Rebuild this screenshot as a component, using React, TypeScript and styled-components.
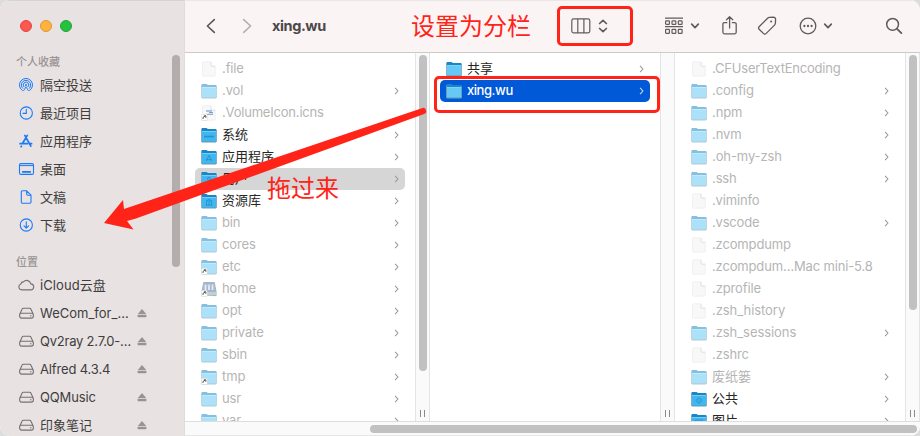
import React from "react";
import styled, { createGlobalStyle, css } from "styled-components";

const Global = createGlobalStyle`
  * { box-sizing: border-box; }
  html, body { margin: 0; padding: 0; }
  body {
    background: #dcdcdc;
    font-family: Inter, "Noto Sans CJK SC", sans-serif;
    overflow: hidden;
  }
  svg { display: block; }
`;

const RED = "#ff2318";

const Window = styled.div`
  position: relative;
  display: flex;
  width: 920px;
  height: 436px;
  overflow: hidden;
  border-radius: 10px;
  background: #fff;
`;

/* ---------- sidebar ---------- */

const Sidebar = styled.aside`
  display: flex;
  flex: none;
  width: 184px;
  height: 436px;
  background: #e8e2e2;
  box-shadow: inset 0 1px 0 #d8d2d2;
`;

const SidebarContent = styled.div`
  width: 172px;
  overflow: hidden;
`;

const Lights = styled.div`
  display: flex;
  gap: 8px;
  padding: 20px 0 0 20px;
  height: 54px;
`;

const Light = styled.span<{ $fill: string; $edge: string }>`
  width: 12px;
  height: 12px;
  border-radius: 50%;
  background: ${(p) => p.$fill};
  border: 0.5px solid ${(p) => p.$edge};
`;

const SectionTitle = styled.h2<{ $top?: number }>`
  margin: ${(p) => p.$top ?? 0}px 0 0 16px;
  height: 17px;
  line-height: 17px;
  font-size: 11px;
  font-weight: 500;
  color: #989393;
`;

const SideRow = styled.div`
  display: flex;
  align-items: center;
  height: 28px;
  padding-left: 18px;
  color: #403d3d;
`;

const SideIcon = styled.span`
  width: 22px;
  flex: none;
`;

const SideLabel = styled.span<{ $ls?: number }>`
  flex: none;
  width: 97px;
  font-size: 13px;
  line-height: 20px;
  white-space: nowrap;
  letter-spacing: ${(p) => p.$ls ?? 0}px;
`;

const SideScroll = styled.div`
  width: 8px;
  height: 212px;
  margin-top: 55px;
  border-radius: 4px;
  background: #b3aead;
`;

/* ---------- main area ---------- */

const Main = styled.main`
  display: flex;
  flex-direction: column;
  width: 736px;
  height: 436px;
  border-left: 1px solid #dfdcdc;
`;

const Toolbar = styled.header`
  display: flex;
  align-items: center;
  flex: none;
  height: 53px;
  padding-left: 20px;
  background: #fbf4f4;
  border-bottom: 1px solid #cfcaca;
  box-shadow: inset 0 1px 0 #ece6e6;
`;

const Tool = styled.span<{ $ml?: number }>`
  flex: none;
  margin-left: ${(p) => p.$ml ?? 0}px;
`;

const Title = styled.h1`
  margin: 0 0 0 19px;
  width: 139px;
  font-size: 14.5px;
  line-height: 20px;
  font-weight: 700;
  letter-spacing: -0.4px;
  color: #4b4747;
`;

const Note = styled.span`
  font-family: "Noto Sans CJK SC", sans-serif;
  font-size: 24px;
  line-height: 30px;
  white-space: nowrap;
  color: ${RED};
`;

const ToolNote = styled.div`
  width: 146px;
  flex: none;
  padding-bottom: 2px;
`;

const ViewSwitch = styled.div`
  display: flex;
  align-items: center;
  flex: none;
  width: 76px;
  height: 40px;
  padding-left: 11px;
  border: 3px solid ${RED};
  border-radius: 5px;
`;

const Browser = styled.div`
  display: flex;
  height: 368px;
  overflow: hidden;
`;

const Column = styled.section`
  width: 230px;
  flex: none;
  padding: 5px 10px 0;
  height: 368px;
  overflow: hidden;
`;

const Track = styled.div`
  display: flex;
  flex-direction: column;
  justify-content: space-between;
  align-items: center;
  flex: none;
  width: 15px;
  height: 368px;
  padding: 2px 0 4px;
  background: #fafafa;
  border-left: 1px solid #e4e4e4;
  border-right: 1px solid #e4e4e4;
`;

const Thumb = styled.div<{ $h: number }>`
  width: 8px;
  height: ${(p) => p.$h}px;
  border-radius: 4px;
  background: #c1c1c1;
`;

const Grip = styled.div`
  width: 5px;
  height: 7px;
  border: solid #8a8a8a;
  border-width: 0 1px;
`;

const BottomTrack = styled.div`
  display: flex;
  justify-content: flex-end;
  height: 15px;
  padding: 3px 3px 0 0;
  background: #fafafa;
  border-top: 1px solid #dedede;
  border-bottom: 1px solid #e6e6e6;
`;

const BottomThumb = styled.div`
  width: 547px;
  height: 8px;
  border-radius: 4px;
  background: #c1c1c1;
`;

type Tone = "dim" | "solid" | "picked" | "active";

const Row = styled.div<{ $tone: Tone }>`
  display: flex;
  align-items: center;
  height: 22px;
  padding: 0 5px 0 6px;
  border-radius: 5px;
  color: ${(p) => (p.$tone === "dim" ? "#b5b5b5" : "#262626")};
  ${(p) => p.$tone === "picked" && css`background: #d6d6d6;`}
  ${(p) =>
    p.$tone === "active" &&
    css`
      background: #0059d6;
      color: #fff;
      font-weight: 500;
    `}
`;

const RowIcon = styled.span`
  width: 21px;
  flex: none;
  padding-bottom: 1px;
`;

const RowLabel = styled.span<{ $ls: number }>`
  flex: 1;
  padding-bottom: 2px;
  font-size: 13px;
  line-height: 20px;
  white-space: nowrap;
  letter-spacing: ${(p) => p.$ls}px;
`;

const Overlay = styled.div`
  position: absolute;
  inset: 0;
  pointer-events: none;
`;

const SelectionFrame = styled.div`
  position: absolute;
  left: 434px;
  top: 76px;
  width: 226px;
  height: 37px;
  border: 3px solid ${RED};
  border-radius: 5px;
`;

const DragNote = styled.div`
  position: absolute;
  left: 267px;
  top: 172px;
`;

/* ---------- icons ---------- */

const BLUE = "#1a7af8";

const sideIcons: Record<string, React.ReactNode> = {
  airdrop: (
    <g fill="none" stroke={BLUE} strokeWidth="1" strokeLinecap="round">
      <path d="M4.4 13.6A6.6 6.6 0 1 1 11.6 13.6" />
      <path d="M4.7 11.4A4.7 4.7 0 1 1 11.3 11.4" />
      <path d="M6 9.9A2.8 2.8 0 1 1 10 9.9" />
      <circle cx="8" cy="8" r="1" fill={BLUE} stroke="none" />
      <path d="M8 10L5.6 13.7M8 10L10.4 13.7" strokeWidth="0.9" />
    </g>
  ),
  recent: (
    <g fill="none" stroke={BLUE} strokeWidth="1.1" strokeLinecap="round">
      <circle cx="8.3" cy="8" r="6.1" />
      <path d="M8.3 4.2V8.4H5" />
    </g>
  ),
  apps: (
    <g fill="none" stroke={BLUE} strokeWidth="1.7" strokeLinecap="round">
      <path d="M6.8 2.4L12.8 13.2M9.3 2.4L4.5 10.5M2.1 10.7H9.4M12 10.7H13.6M3.4 13.2L3.1 13.7" />
    </g>
  ),
  desktop: (
    <g>
      <rect x="1.5" y="2.6" width="14" height="10.8" rx="1.4" fill="none" stroke={BLUE} strokeWidth="1.1" />
      <path d="M1.5 4.6H15.5" stroke={BLUE} strokeWidth="1" />
      <rect x="4" y="10" width="9" height="1.8" rx="0.5" fill={BLUE} />
    </g>
  ),
  document: (
    <path d="M4.4 1.8H8.7L13 6.2V13.1Q13 14.2 11.9 14.2H4.4Q3.3 14.2 3.3 13.1V2.9Q3.3 1.8 4.4 1.8ZM8.7 1.8V5.3Q8.7 6.2 9.6 6.2H13" fill="none" stroke={BLUE} strokeWidth="1.1" strokeLinejoin="round" />
  ),
  download: (
    <g fill="none" stroke={BLUE} strokeWidth="1.1" strokeLinecap="round" strokeLinejoin="round">
      <circle cx="8.3" cy="8" r="6.1" />
      <path d="M8.3 4.8V10.9M6 8.8L8.3 11.1L10.6 8.8" />
    </g>
  ),
  cloud: (
    <path d="M3.7 12.9A3.1 3.1 0 0 1 2.9 6.9A2.4 2.4 0 0 1 5.5 4.9A4.2 4.2 0 0 1 12.8 6.9A3 3 0 0 1 12.6 12.9Z" fill="none" stroke="#767272" strokeWidth="1.1" strokeLinejoin="round" />
  ),
  drive: (
    <g fill="none" stroke="#767272" strokeWidth="1.1" strokeLinejoin="round">
      <path d="M1.9 9L4 4.2Q4.4 3.2 5.4 3.2H11.6Q12.6 3.2 13 4.2L15.1 9" />
      <rect x="1.6" y="8.3" width="13.8" height="4.8" rx="2" />
      <circle cx="12.8" cy="10.7" r="0.7" fill="#767272" stroke="none" />
    </g>
  ),
};

const SideGlyph = ({ name }: { name: string }) => (
  <svg width="17" height="16" viewBox="0 0 17 16">{sideIcons[name]}</svg>
);

const Eject = () => (
  <svg width="10" height="10" viewBox="0 0 10 10" fill="#989393">
    <path d="M5 1L9.4 6.2H0.6Z" />
    <rect x="0.6" y="7.1" width="8.8" height="2.1" rx="0.4" />
  </svg>
);

const Folder = ({ dim, mark }: { dim?: boolean; mark?: string }) => (
  <svg width="16" height="16" viewBox="0 0 16 16">
    <path d="M0.4 2Q0.4 0.9 1.4 0.9H5.6L6.9 1.9H14.6Q15.6 1.9 15.6 2.9V5H0.4Z" fill={dim ? "#86bfdf" : "#1a86c6"} />
    <rect x="0.4" y="4" width="15.2" height="11.2" rx="0.9" fill={dim ? "#ace1fa" : mark ? "#41b6ef" : "#66c9f5"} />
    <path d="M0.8 4.5H15.2" stroke={dim ? "#c6edfd" : "#80d5f9"} strokeWidth="0.8" />
    <path d="M0.8 14.9H15.2" stroke={dim ? "#b3c6cf" : "#6d96aa"} strokeWidth="0.9" />
    <path d="M0.4 2.3V14.8M15.6 3V14.8" stroke={dim ? "#bccbd3" : "#7ba2b5"} strokeWidth="0.8" />
    {mark && <path d={mark} fill="none" stroke="#1f93d0" strokeWidth="0.9" />}
  </svg>
);

const File = () => (
  <svg width="16" height="16" viewBox="0 0 16 16">
    <path d="M2.4 0.8H10L14.3 5.2V14.2Q14.3 15.2 13.3 15.2H2.4Q1.5 15.2 1.5 14.2V1.8Q1.5 0.8 2.4 0.8Z" fill="#f8f8f8" stroke="#ececec" strokeWidth="0.7" />
    <path d="M10 0.8V4.2Q10 5.2 11 5.2H14.3Z" fill="#fff" />
    <path d="M10 1.2V4.2Q10 5.2 11 5.2H14" fill="none" stroke="#d6d6d6" strokeWidth="0.8" />
  </svg>
);

const AliasBadge = () => (
  <g>
    <rect x="0.3" y="9.3" width="6" height="6.2" rx="0.8" fill="#fff" stroke="#c5c5c5" strokeWidth="0.4" />
    <path d="M2 14V12.4L4.4 11M2.9 10.8H4.8V12.8" fill="none" stroke="#555" strokeWidth="1" />
  </g>
);

const AliasFolder = () => (
  <svg width="16" height="16" viewBox="0 0 16 16"><Folder dim /><AliasBadge /></svg>
);

const IconFile = () => (
  <svg width="16" height="16" viewBox="0 0 16 16">
    <File />
    <path d="M5 6H11M6 9.4H12" stroke="#86b4e8" strokeWidth="1.4" />
    <path d="M8 7.6H12" stroke="#8a8f99" strokeWidth="1" />
    <AliasBadge />
  </svg>
);

const HomeDrive = () => (
  <svg width="16" height="16" viewBox="0 0 16 16">
    <path d="M2.4 0.9H13.6L15.5 10V14.9H0.5V10Z" fill="#a5b5ca" />
    <path d="M4.5 3.4V9M8 3.4V9M11.5 3.4V9" stroke="#edf2f8" strokeWidth="1.7" />
    <path d="M3 4.8H13" stroke="#c9d3e0" strokeWidth="0.7" />
    <rect x="0.6" y="11" width="14.8" height="3.6" fill="#c3ccd8" />
    <path d="M11 14.6H15" stroke="#8dc76e" strokeWidth="0.8" />
    <AliasBadge />
  </svg>
);

const Chevron = ({ color }: { color: string }) => (
  <svg width="6" height="8" viewBox="0 0 6 8" fill="none" stroke={color} strokeWidth="1.1">
    <path d="M1.1 0.9L3.9 4L1.1 7.1" />
  </svg>
);

const marks = {
  mac: "M3 9.6H13M4 8.4V10.6M6 8.4V10.6M8 8.4V10.6M10 8.4V10.6M12 8.4V10.6",
  app: "M8 6.5L5.2 12M8 6.5L10.8 12M5 10.6H11",
  user: "M8 6.4A1.5 1.5 0 1 0 8 9.4A1.5 1.5 0 1 0 8 6.4M5 12.5Q8 8.8 11 12.5",
  library: "M5 8L8 6.4L11 8ZM5.5 9V12M8 9V12M10.5 9V12M4.8 12.2H11.2",
  sign: "M8 6.5L11.2 9.5L8 12.5L4.8 9.5ZM8 8.4V10.6",
  photo: "M4.5 7H11.5V12H4.5ZM5 11L7.5 9L9 10.5L11 9",
};

/* ---------- data ---------- */

type Item = {
  name: string;
  icon?: "file" | "icns" | "alias" | "home";
  mark?: string;
  tone?: Tone;
  leaf?: boolean;
  ls?: number;
};

const rootItems: Item[] = [
  { name: ".file", icon: "file", leaf: true },
  { name: ".vol" },
  { name: ".VolumeIcon.icns", icon: "icns", leaf: true, ls: -0.2 },
  { name: "系统", tone: "solid", mark: marks.mac },
  { name: "应用程序", tone: "solid", mark: marks.app },
  { name: "用户", tone: "picked", mark: marks.user },
  { name: "资源库", tone: "solid", mark: marks.library },
  { name: "bin" },
  { name: "cores" },
  { name: "etc", icon: "alias" },
  { name: "home", icon: "home" },
  { name: "opt" },
  { name: "private" },
  { name: "sbin" },
  { name: "tmp", icon: "alias" },
  { name: "usr" },
  { name: "var" },
];

const userItems: Item[] = [
  { name: "共享", tone: "solid" },
  { name: "xing.wu", tone: "active", ls: -0.45 },
];

const homeItems: Item[] = [
  { name: ".CFUserTextEncoding", icon: "file", leaf: true, ls: -0.2 },
  { name: ".config" },
  { name: ".npm" },
  { name: ".nvm" },
  { name: ".oh-my-zsh", ls: -0.1 },
  { name: ".ssh" },
  { name: ".viminfo", icon: "file", leaf: true, ls: -0.15 },
  { name: ".vscode", ls: -0.2 },
  { name: ".zcompdump", icon: "file", leaf: true, ls: -0.15 },
  { name: ".zcompdum…Mac mini-5.8", icon: "file", leaf: true, ls: -0.16 },
  { name: ".zprofile", icon: "file", leaf: true },
  { name: ".zsh_history", icon: "file", leaf: true, ls: -0.06 },
  { name: ".zsh_sessions", ls: -0.06 },
  { name: ".zshrc", icon: "file", leaf: true },
  { name: "废纸篓" },
  { name: "公共", tone: "solid", mark: marks.sign },
  { name: "图片", tone: "solid", mark: marks.photo },
];

const favourites = [
  ["airdrop", "隔空投送"],
  ["recent", "最近项目"],
  ["apps", "应用程序"],
  ["desktop", "桌面"],
  ["document", "文稿"],
  ["download", "下载"],
];

const locations: [string, string, boolean, number][] = [
  ["cloud", "iCloud云盘", false, 0.08],
  ["drive", "WeCom_for_…", true, 0],
  ["drive", "Qv2ray 2.7.0-…", true, -0.22],
  ["drive", "Alfred 4.3.4", true, -0.15],
  ["drive", "QQMusic", true, -0.15],
  ["drive", "印象笔记", true, 0],
];

const ItemIcon = ({ item }: { item: Item }) => {
  if (item.icon === "file") return <File />;
  if (item.icon === "icns") return <IconFile />;
  if (item.icon === "alias") return <AliasFolder />;
  if (item.icon === "home") return <HomeDrive />;
  return <Folder dim={!item.tone} mark={item.mark} />;
};

const defaultSpacing = (name: string) => (/[a-z]/.test(name) ? -0.12 : 0);

const FileColumn = ({ items }: { items: Item[] }) => (
  <Column>
    {items.map((item) => (
      <Row key={item.name} $tone={item.tone ?? "dim"}>
        <RowIcon><ItemIcon item={item} /></RowIcon>
        <RowLabel $ls={item.ls ?? defaultSpacing(item.name)}>{item.name}</RowLabel>
        {!item.leaf && <Chevron color={item.tone === "active" ? "#c5dbf8" : "#9a9a9a"} />}
      </Row>
    ))}
  </Column>
);

const INK = "#615c5c";

const DownCaret = () => (
  <svg width="10" height="8" viewBox="0 0 10 8" fill="none" stroke={INK} strokeWidth="1.7" strokeLinecap="round" strokeLinejoin="round">
    <path d="M1.7 2.2L5 5.6L8.3 2.2" />
  </svg>
);

export default function App() {
  return (
    <>
      <Global />
      <Window>
        <Sidebar>
          <SidebarContent>
            <Lights>
              <Light $fill="#fe5650" $edge="#dd4843" />
              <Light $fill="#ffb23f" $edge="#df9730" />
              <Light $fill="#27c141" $edge="#1ea534" />
            </Lights>
            <SectionTitle>个人收藏</SectionTitle>
            {favourites.map(([icon, label]) => (
              <SideRow key={label}>
                <SideIcon><SideGlyph name={icon} /></SideIcon>
                <SideLabel>{label}</SideLabel>
              </SideRow>
            ))}
            <SectionTitle $top={15}>位置</SectionTitle>
            {locations.map(([icon, label, eject, ls]) => (
              <SideRow key={label}>
                <SideIcon><SideGlyph name={icon} /></SideIcon>
                <SideLabel $ls={ls}>{label}</SideLabel>
                {eject && <Eject />}
              </SideRow>
            ))}
          </SidebarContent>
          <SideScroll />
        </Sidebar>
        <Main>
          <Toolbar>
            <Tool>
              <svg width="12" height="16" viewBox="0 0 12 16" fill="none" stroke="#5b5656" strokeWidth="1.6" strokeLinecap="round" strokeLinejoin="round"><path d="M9.3 1.6L2.4 8L9.3 14.4" /></svg>
            </Tool>
            <Tool $ml={24}>
              <svg width="12" height="16" viewBox="0 0 12 16" fill="none" stroke="#b5afaf" strokeWidth="1.6" strokeLinecap="round" strokeLinejoin="round"><path d="M2.7 1.6L9.6 8L2.7 14.4" /></svg>
            </Tool>
            <Title>xing.wu</Title>
            <ToolNote><Note>设置为分栏</Note></ToolNote>
            <ViewSwitch>
              <svg width="20" height="16" viewBox="0 0 20 16" fill="none" stroke={INK} strokeWidth="1.2">
                <rect x="0.8" y="0.9" width="18" height="14" rx="1.8" /><path d="M6.8 1V15M12.9 1V15" />
              </svg>
              <Tool $ml={7}>
                <svg width="10" height="14" viewBox="0 0 10 14" fill="none" stroke={INK} strokeWidth="1.7" strokeLinecap="round" strokeLinejoin="round"><path d="M1.6 4.5L5 1.3L8.4 4.5M1.6 9.5L5 12.7L8.4 9.5" /></svg>
              </Tool>
            </ViewSwitch>
            <Tool $ml={31}>
              <svg width="20" height="18" viewBox="0 0 20 18" fill="none" stroke={INK} strokeWidth="1.2">
                <path d="M1 1.2H19M1 9.6H19" />
                {[1.6, 8, 14.3].map((x) => (
                  <g key={x}><rect x={x} y="3.8" width="3.8" height="3.6" rx="0.7" /><rect x={x} y="12.4" width="3.8" height="4" rx="0.7" /></g>
                ))}
              </svg>
            </Tool>
            <Tool $ml={6}><DownCaret /></Tool>
            <Tool $ml={21}>
              <svg width="18" height="20" viewBox="0 0 18 20" fill="none" stroke={INK} strokeWidth="1.3" strokeLinecap="round" strokeLinejoin="round">
                <path d="M5.8 6.7H3.4Q1.9 6.7 1.9 8.2V16.3Q1.9 17.8 3.4 17.8H13.7Q15.2 17.8 15.2 16.3V8.2Q15.2 6.7 13.7 6.7H11.4M8.6 12V0.9M5.5 3.8L8.6 0.7L11.7 3.8" />
              </svg>
            </Tool>
            <Tool $ml={18}>
              <svg width="20" height="20" viewBox="0 0 20 20" fill="none" stroke={INK} strokeWidth="1.3" strokeLinejoin="round">
                <path d="M10.6 2.2Q11.4 1.4 12.4 1.3L16.2 1.1Q18.6 1.1 18.6 3.4L18.4 7.2Q18.3 8.3 17.5 9.1L9 17.6Q7.8 18.8 6.6 17.6L2.1 13.2Q0.9 12 2.1 10.8Z" />
                <circle cx="14.1" cy="5.6" r="1" fill={INK} stroke="none" />
              </svg>
            </Tool>
            <Tool $ml={22}>
              <svg width="18" height="18" viewBox="0 0 18 18" fill="none" stroke={INK} strokeWidth="1.3">
                <circle cx="9" cy="9" r="7.8" />
                <g fill={INK} stroke="none"><circle cx="5.4" cy="9" r="1.15" /><circle cx="9" cy="9" r="1.15" /><circle cx="12.6" cy="9" r="1.15" /></g>
              </svg>
            </Tool>
            <Tool $ml={6}><DownCaret /></Tool>
            <Tool $ml={52}>
              <svg width="18" height="18" viewBox="0 0 18 18" fill="none" stroke={INK} strokeWidth="1.5" strokeLinecap="round"><circle cx="7.6" cy="7.3" r="5.9" /><path d="M12 11.8L16.4 16.1" strokeWidth="1.8" /></svg>
            </Tool>
          </Toolbar>
          <Browser>
            <FileColumn items={rootItems} />
            <Track><Thumb $h={316} /><Grip /></Track>
            <FileColumn items={userItems} />
            <Track><span /><Grip /></Track>
            <FileColumn items={homeItems} />
            <Track><Thumb $h={255} /><Grip /></Track>
          </Browser>
          <BottomTrack><BottomThumb /></BottomTrack>
        </Main>
        <Overlay>
          <SelectionFrame />
          <svg width="920" height="436" viewBox="0 0 920 436">
            <path d="M104 223L123 200L124 209L421.8 108.2A3.1 3.1 0 0 1 424.2 114L136 218.5L127 221L133.5 229.5Z" fill={RED} />
          </svg>
          <DragNote><Note>拖过来</Note></DragNote>
        </Overlay>
      </Window>
    </>
  );
}
